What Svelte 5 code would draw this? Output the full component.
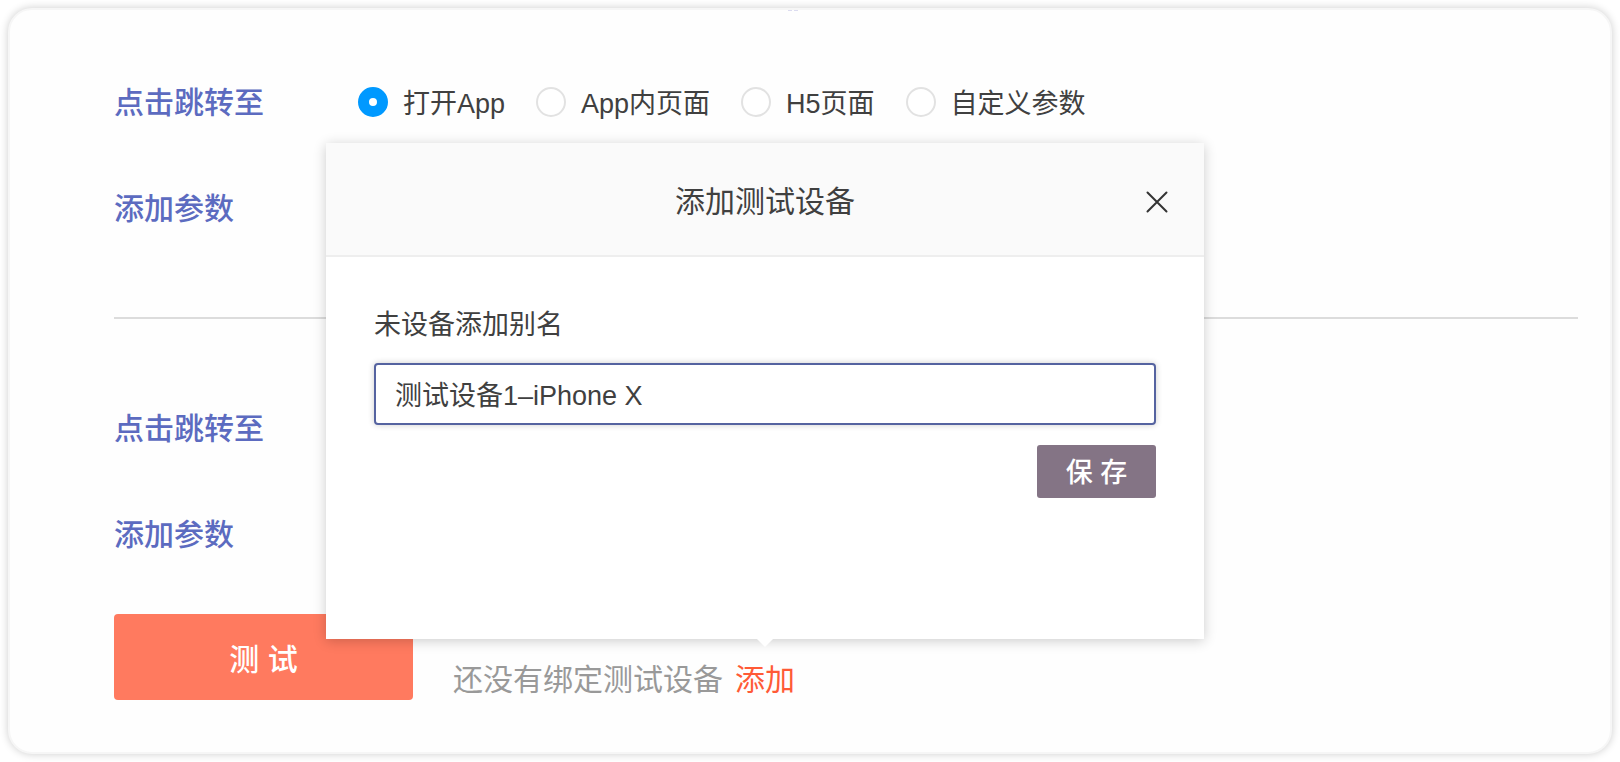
<script>
  const targets = ['打开App', 'App内页面', 'H5页面', '自定义参数'];
  let target = $state('打开App');
  let alias = $state('测试设备1–iPhone X');
  let open = $state(true);
</script>

<main class="card">
  <div class="dashes" aria-hidden="true"><i></i><i></i></div>

  <section class="group">
    <div class="row">
      <h2 id="target-label">点击跳转至</h2>
      <div class="radios" role="radiogroup" aria-labelledby="target-label">
        {#each targets as name}
          <label class="radio">
            <input type="radio" name="target" value={name} bind:group={target} />
            <span>{name}</span>
          </label>
        {/each}
      </div>
    </div>
    <div class="row"><h2>添加参数</h2></div>
  </section>

  <hr />

  <section class="group">
    <div class="row"><h2>点击跳转至</h2></div>
    <div class="row"><h2>添加参数</h2></div>
  </section>

  <div class="actions">
    <button class="test" type="button">测 试</button>
    <p class="hint">
      <span>还没有绑定测试设备</span>
      <span class="anchor">
        <a href="#add" onclick={(e) => { e.preventDefault(); open = true; }}>添加</a>
        {#if open}
          <div class="popover" role="dialog" aria-labelledby="pop-title">
            <div class="pop-head">
              <h3 id="pop-title">添加测试设备</h3>
              <button class="close" type="button" aria-label="关闭" onclick={() => (open = false)}>
                <svg viewBox="0 0 22 22" width="22" height="22" fill="none" stroke="#333" stroke-width="2" stroke-linecap="round">
                  <path d="M1.5 1.5 20.5 20.5M20.5 1.5 1.5 20.5" />
                </svg>
              </button>
            </div>
            <form class="pop-body" onsubmit={(e) => e.preventDefault()}>
              <label for="alias">未设备添加别名</label>
              <input id="alias" type="text" bind:value={alias} />
              <button class="save" type="submit">保 存</button>
            </form>
          </div>
        {/if}
      </span>
    </p>
  </div>
</main>

<style>
  :global(body) {
    background: #fff;
  }

  .card,
  .card button,
  .card input {
    font-family: 'Liberation Sans', 'Noto Sans CJK SC', sans-serif;
  }

  .card {
    box-sizing: border-box;
    margin: 8px;
    padding: 0 32px 52px 104px;
    border: 2px solid #f6f6f6;
    border-radius: 24px;
    background: #fefefe;
    box-shadow: 0 0 8px rgba(0, 0, 0, 0.2);
    color: #404040;
    font-size: 27px;
  }

  h2,
  h3,
  p {
    margin: 0;
  }

  .dashes {
    display: flex;
    justify-content: center;
    gap: 2px;
    height: 71px;
    margin-right: 106px;
  }

  .dashes i {
    width: 4px;
    height: 1px;
    background: #dcdcf0;
  }

  .group {
    display: flex;
    flex-direction: column;
    gap: 62px;
  }

  .row {
    display: flex;
    align-items: center;
    height: 44px;
  }

  h2 {
    flex: 0 0 244px;
    color: #5c6bc0;
    font-size: 30px;
    font-weight: 500;
    line-height: 44px;
  }

  .radios {
    display: flex;
    gap: 31px;
  }

  .radio {
    display: flex;
    align-items: center;
    gap: 15px;
    line-height: 44px;
  }

  .radio input {
    appearance: none;
    box-sizing: border-box;
    width: 30px;
    height: 30px;
    margin: 0 0 2px;
    border: 2px solid #e2e2e2;
    border-radius: 50%;
    background: #fff;
  }

  .radio input:checked {
    border: 11px solid #0099ff;
  }

  .radio span {
    padding-top: 2px;
  }

  hr {
    height: 2px;
    margin: 86px 0 88px;
    border: 0;
    background: #dcdcdc;
  }

  .actions {
    display: flex;
    align-items: flex-end;
    gap: 40px;
    margin-top: 57px;
  }

  .test {
    width: 299px;
    height: 86px;
    padding: 0;
    border: 0;
    border-radius: 4px;
    background: #ff7a5f;
    color: #fff;
    font-size: 30px;
    font-weight: 500;
  }

  .hint {
    display: flex;
    gap: 12px;
    color: #999;
    font-size: 30px;
    line-height: 40px;
  }

  .anchor {
    position: relative;
  }

  .anchor a {
    color: #ff5a36;
    text-decoration: none;
  }

  .popover {
    position: absolute;
    bottom: 61px;
    left: 50%;
    box-sizing: border-box;
    width: 878px;
    margin-left: -439px;
    background: #fff;
    box-shadow: 0 2px 12px rgba(0, 0, 0, 0.2);
    color: #404040;
    font-size: 27px;
  }

  .popover::after {
    content: '';
    position: absolute;
    top: 100%;
    left: 50%;
    margin-left: -8px;
    border: 8px solid transparent;
    border-top-color: #fff;
    border-bottom: 0;
  }

  .pop-head {
    box-sizing: border-box;
    display: grid;
    grid-template-columns: 1fr auto 1fr;
    align-items: center;
    height: 114px;
    padding: 6px 36px 0;
    border-bottom: 2px solid #eee;
    background: #fafafa;
  }

  h3 {
    grid-column: 2;
    font-size: 30px;
    font-weight: 400;
  }

  .close {
    display: flex;
    justify-self: end;
    padding: 0;
    border: 0;
    background: none;
  }

  .pop-body {
    display: flex;
    flex-direction: column;
    padding: 48px 48px 141px;
  }

  .pop-body label {
    line-height: 40px;
  }

  .pop-body input {
    box-sizing: border-box;
    height: 62px;
    margin: 18px 0 20px;
    padding: 0 19px 2px;
    border: 2px solid #5563a0;
    border-radius: 4px;
    outline: 0;
    background: #fff;
    box-shadow: 0 0 6px rgba(0, 0, 0, 0.2);
    color: #404040;
    font-size: 27px;
  }

  .save {
    align-self: flex-end;
    width: 119px;
    height: 53px;
    padding: 0 0 2px;
    border: 0;
    border-radius: 3px;
    background: #847485;
    color: #fff;
    font-size: 27px;
    font-weight: 500;
  }
</style>
